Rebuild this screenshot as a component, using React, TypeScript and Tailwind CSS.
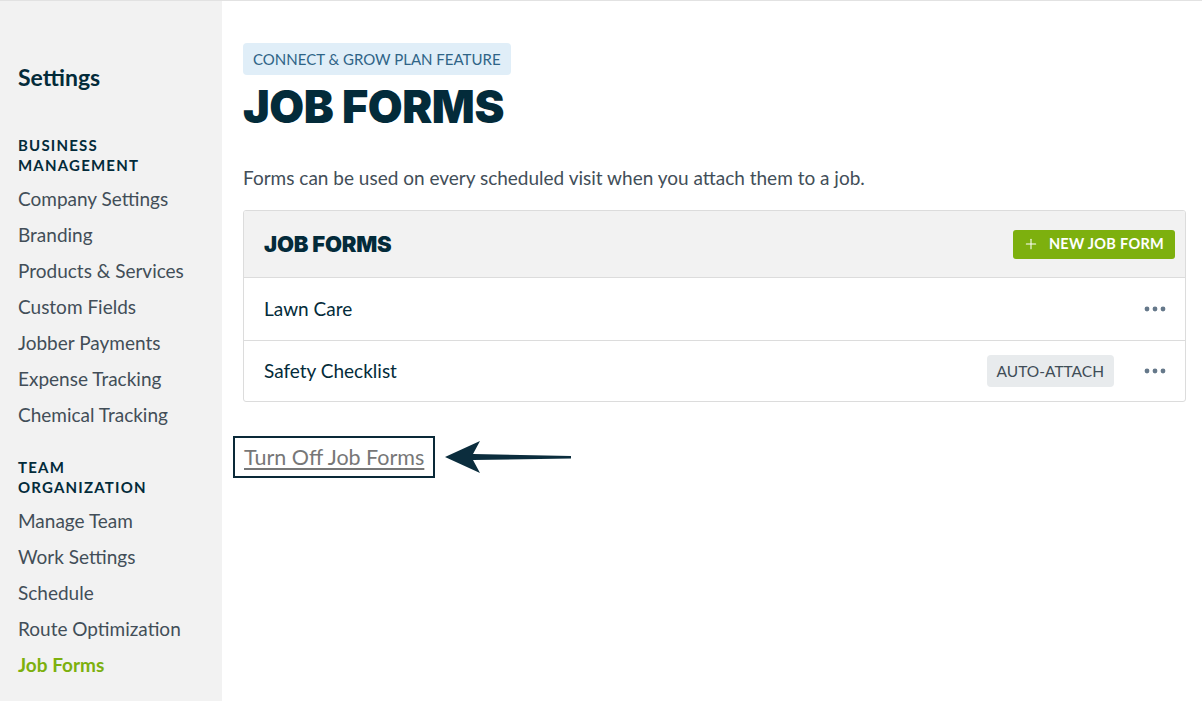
import { Plus } from "lucide-react";

const businessItems = [
  "Company Settings",
  "Branding",
  "Products & Services",
  "Custom Fields",
  "Jobber Payments",
  "Expense Tracking",
  "Chemical Tracking",
];

const teamItems = ["Manage Team", "Work Settings", "Schedule", "Route Optimization"];

const Dots = () => (
  <svg width="22" height="6" viewBox="0 0 22 6" className="text-[#65788a]">
    <circle cx="3" cy="3" r="2.4" fill="currentColor" />
    <circle cx="11" cy="3" r="2.4" fill="currentColor" />
    <circle cx="19" cy="3" r="2.4" fill="currentColor" />
  </svg>
);

const App = () => {
  return (
    <div
      className="flex h-[701px] w-[1202px] border-t border-[#e2e2e2] bg-white text-[#032b3a]"
      style={{ fontFamily: "Lato, 'Open Sans', sans-serif" }}
    >
      <aside className="w-[222px] shrink-0 bg-[#f2f2f2] pl-[18px] pt-[62px]">
        <h2 className="text-[23px] font-bold leading-[28px]">Settings</h2>

        <div className="mt-[44px] text-[15px] font-bold uppercase leading-[20px] tracking-[0.08em]">
          Business
          <br />
          Management
        </div>
        <ul className="mt-[6px] flex flex-col text-[19px] leading-[36px] text-[#424e58]">
          {businessItems.map((item) => (
            <li key={item}>{item}</li>
          ))}
        </ul>

        <div className="mt-[24px] text-[15px] font-bold uppercase leading-[20px] tracking-[0.08em]">
          Team
          <br />
          Organization
        </div>
        <ul className="mt-[6px] flex flex-col text-[19px] leading-[36px] text-[#424e58]">
          {teamItems.map((item) => (
            <li key={item}>{item}</li>
          ))}
          <li className="font-bold text-[#7db00e]">Job Forms</li>
        </ul>
      </aside>

      <main className="flex-1 pl-[21px] pr-[16px] pt-[42px]">
        <span className="inline-block rounded-[4px] bg-[#e0eef8] px-[10px] text-[15px] leading-[32px] text-[#2f6487]">
          CONNECT &amp; GROW PLAN FEATURE
        </span>

        <h1
          className="mt-[8px] text-[45px] font-black leading-[48px] tracking-[-0.01em]"
          style={{ fontFamily: "Inter, sans-serif" }}
        >
          JOB FORMS
        </h1>

        <p className="mt-[35px] text-[19px] leading-[24px] text-[#424e58]">
          Forms can be used on every scheduled visit when you attach them to a job.
        </p>

        <div className="mt-[20px] overflow-hidden rounded-[3px] border border-[#dcdcdc]">
          <div className="flex h-[66px] items-center justify-between bg-[#f2f2f2] pl-[20px] pr-[10px]">
            <h3
              className="text-[22px] font-black tracking-[-0.01em]"
              style={{ fontFamily: "Inter, sans-serif" }}
            >
              JOB FORMS
            </h3>
            <button className="flex h-[29px] items-center gap-[10px] rounded-[3px] bg-[#7db00e] pl-[10px] pr-[11px] text-[14.5px] font-bold tracking-[0.02em] text-white">
              <Plus size={16} strokeWidth={1.6} />
              NEW JOB FORM
            </button>
          </div>

          <div className="flex h-[63px] items-center justify-between border-t border-[#dcdcdc] pl-[20px] pr-[19px]">
            <span className="text-[19px]">Lawn Care</span>
            <Dots />
          </div>

          <div className="flex h-[61px] items-center justify-between border-t border-[#dcdcdc] pl-[20px] pr-[19px]">
            <span className="text-[19px]">Safety Checklist</span>
            <div className="flex items-center gap-[30px]">
              <span className="rounded-[4px] bg-[#e8ebed] px-[10px] text-[15.5px] leading-[32px] text-[#3f4d57]">
                AUTO-ATTACH
              </span>
              <Dots />
            </div>
          </div>
        </div>

        <div className="-ml-[10px] mt-[34px] flex items-center gap-[10px]">
          <div className="border-[2.5px] border-[#0a2938] px-[9px] py-[5.5px]">
            <span className="text-[21.5px] leading-[26px] text-[#777] underline underline-offset-[3px]">
              Turn Off Job Forms
            </span>
          </div>
          <svg width="130" height="34" viewBox="0 0 130 34">
            <path
              d="M0 17 L35 1 L28 14 L126 16 L126 18.5 L28 20 L35 33 Z"
              fill="#0b2d3d"
            />
          </svg>
        </div>
      </main>
    </div>
  );
};

export default App;
